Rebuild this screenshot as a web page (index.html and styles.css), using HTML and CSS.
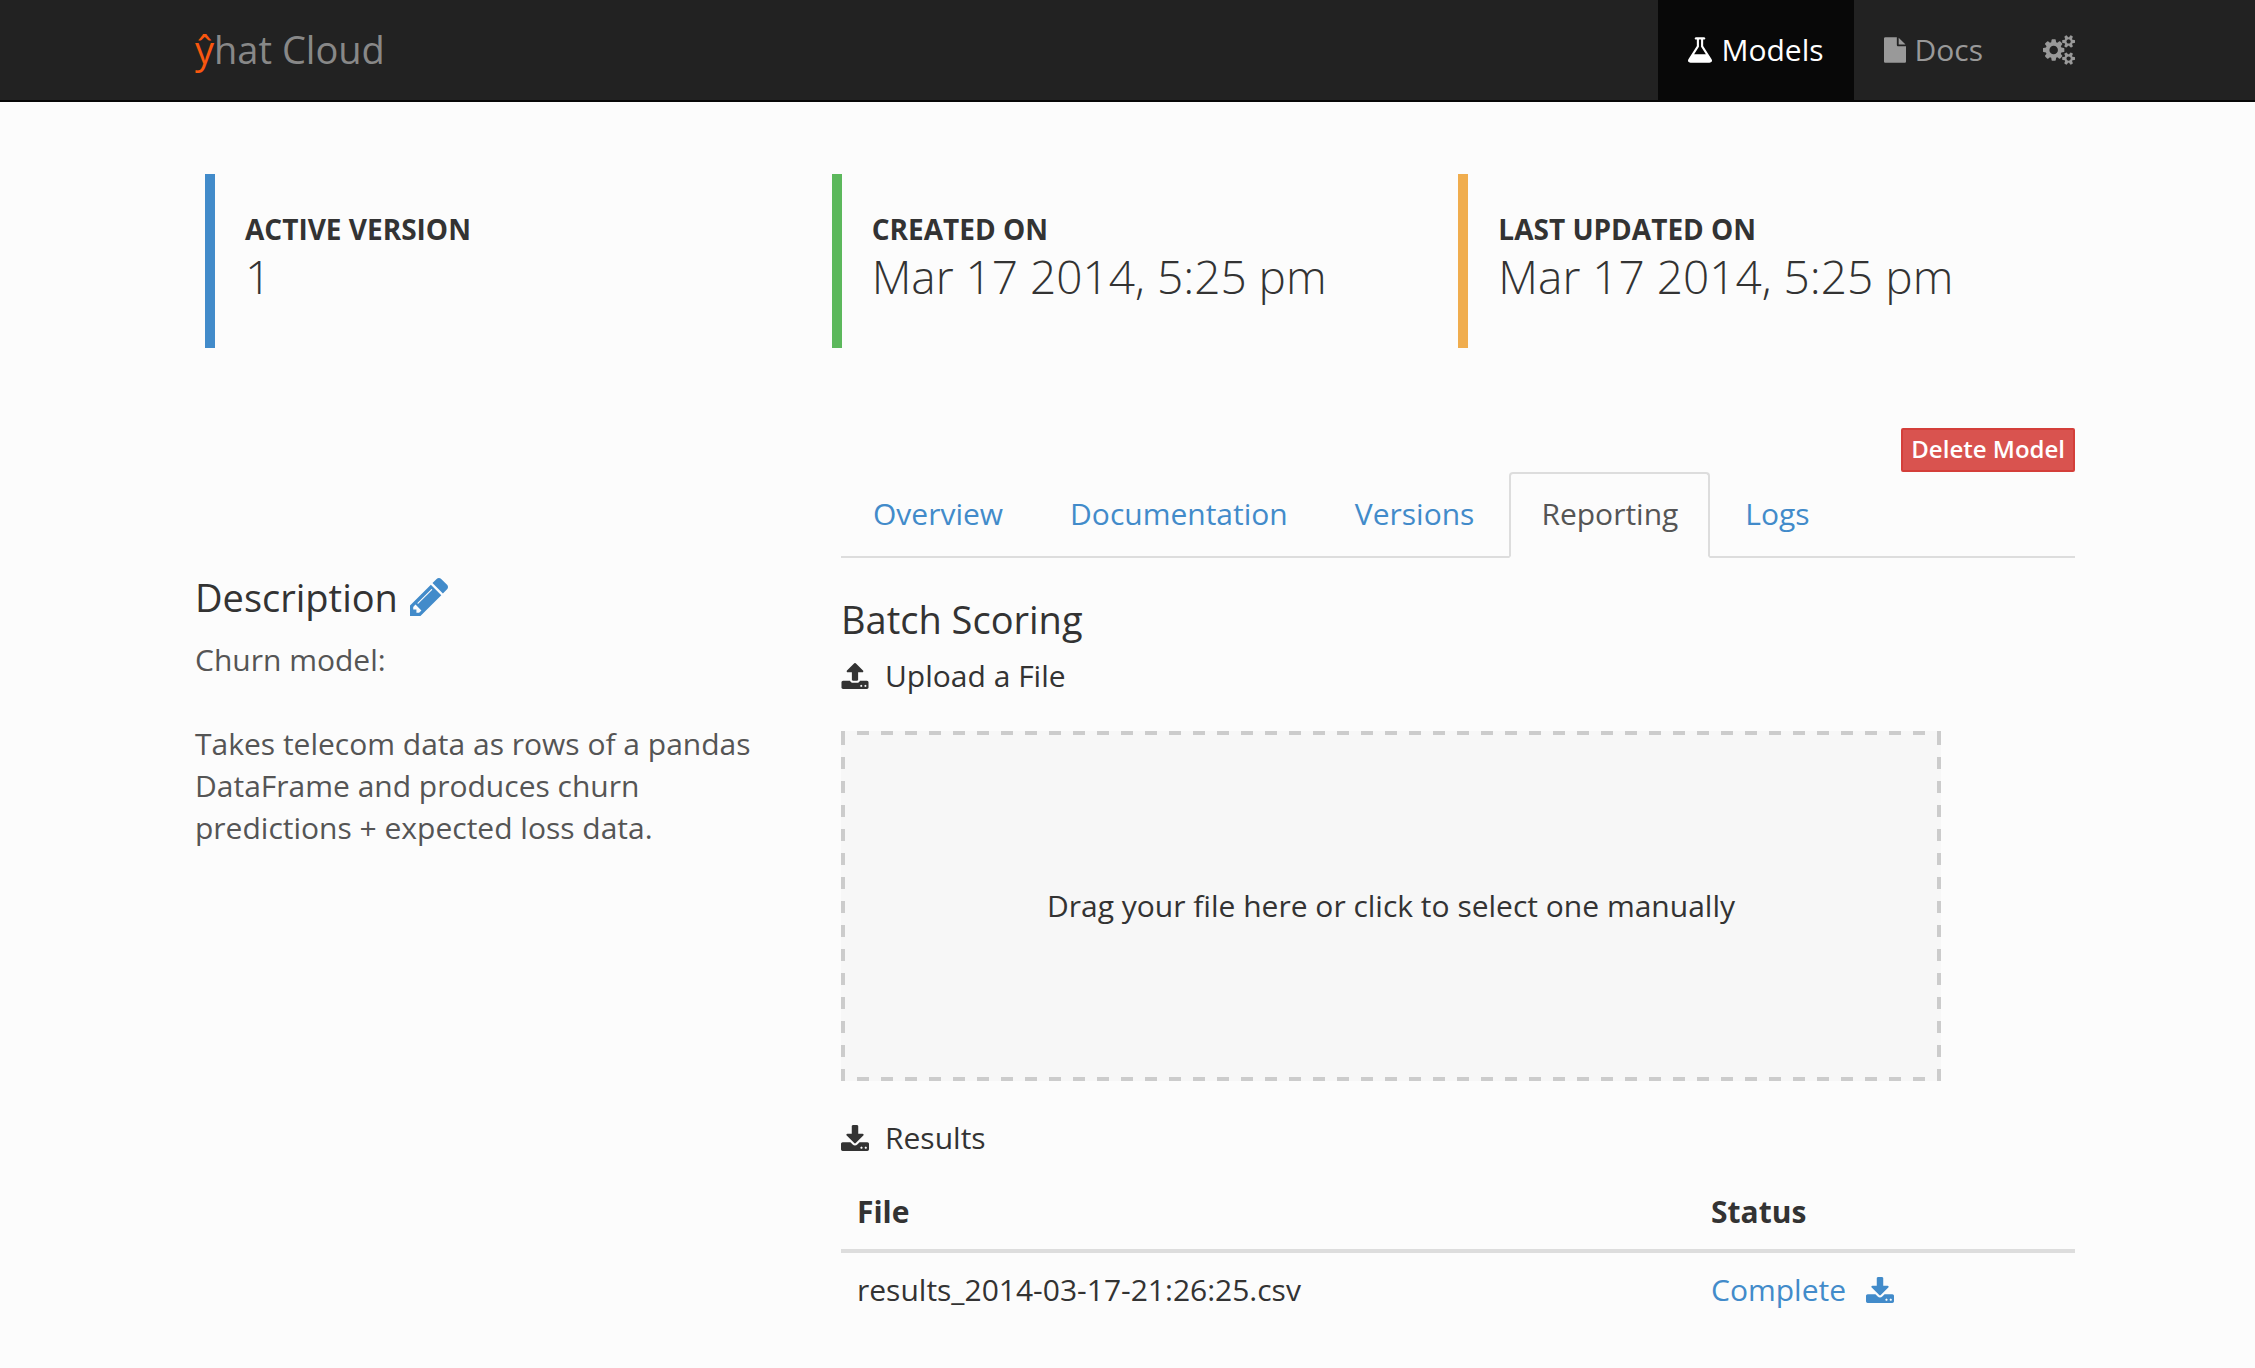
FILE: index.html
```html
<!DOCTYPE html>
<html lang="en">
<head>
<meta charset="utf-8">
<title>ŷhat Cloud</title>
<link rel="stylesheet" href="styles.css">
</head>
<body>
<svg class="sprite" aria-hidden="true">
  <symbol id="upload" viewBox="64 64 1664 1600"><path d="M1344 1472q0-26-19-45t-45-19-45 19-19 45 19 45 45 19 45-19 19-45zm256 0q0-26-19-45t-45-19-45 19-19 45 19 45 45 19 45-19 19-45zm128-224v320q0 40-28 68t-68 28h-1472q-40 0-68-28t-28-68v-320q0-40 28-68t68-28h427q21 56 70.500 92t110.500 36h256q61 0 110.500-36t70.500-92h427q40 0 68 28t28 68zm-325-648q-17 40-59 40h-256v448q0 26-19 45t-45 19h-256q-26 0-45-19t-19-45v-448h-256q-42 0-59-40-17-39 14-69l448-448q18-19 45-19t45 19l448 448q31 30 14 69z"/></symbol>
  <symbol id="download" viewBox="64 0 1664 1536"><path d="M1344 1344q0-26-19-45t-45-19-45 19-19 45 19 45 45 19 45-19 19-45zm256 0q0-26-19-45t-45-19-45 19-19 45 19 45 45 19 45-19 19-45zm128-224v320q0 40-28 68t-68 28h-1472q-40 0-68-28t-28-68v-320q0-40 28-68t68-28h465l135 136q58 56 136 56t136-56l136-136h464q40 0 68 28t28 68zm-325-569q17 41-14 70l-448 448q-18 19-45 19t-45-19l-448-448q-31-29-14-70 17-39 59-39h256v-448q0-26 19-45t45-19h256q26 0 45 19t19 45v448h256q42 0 59 39z"/></symbol>
</svg>

<header class="navbar">
  <div class="container navbar-row">
    <a class="brand" href="#"><span class="brand-mark">ŷ</span>hat Cloud</a>
    <nav class="nav">
      <a class="nav-link active" href="#">
        <svg class="icon-flask" viewBox="168 128 1456 1536" aria-hidden="true"><path d="M1591 1448q56 89 21.500 152.500t-140.500 63.500h-1152q-106 0-140.500-63.500t21.500-152.500l503-793v-399h-64q-26 0-45-19t-19-45 19-45 45-19h512q26 0 45 19t19 45-19 45-45 19h-64v399zm-779-725l-272 429h712l-272-429-20-31v-436h-128v436z"/></svg>
        Models</a>
      <a class="nav-link" href="#">
        <svg class="icon-file" viewBox="128 0 1536 1792" aria-hidden="true"><path d="M1152 512v-472q22 14 36 28l408 408q14 14 28 36h-472zm-128 32q0 40 28 68t68 28h544v1056q0 40-28 68t-68 28h-1344q-40 0-68-28t-28-68v-1600q0-40 28-68t68-28h800v544z"/></svg>
        Docs</a>
      <a class="nav-link" href="#" aria-label="Settings">
        <svg class="icon-cogs" viewBox="-64 0 1920 1792" aria-hidden="true"><path d="M832 896q0-106-75-181t-181-75-181 75-75 181 75 181 181 75 181-75 75-181zm768 512q0-52-38-90t-90-38-90 38-38 90q0 53 37.500 90.500t90.500 37.500 90.500-37.500 37.500-90.500zm0-1024q0-52-38-90t-90-38-90 38-38 90q0 53 37.500 90.500t90.500 37.500 90.500-37.500 37.500-90.500zm-384 421v185q0 10-7 19.500t-16 10.500l-155 24q-11 35-32 76 34 48 90 115 7 11 7 20 0 12-7 19-23 30-82.500 89.500t-78.500 59.500q-11 0-21-7l-115-90q-37 19-77 31-11 108-23 155-7 24-30 24h-186q-11 0-20-7.500t-10-17.500l-23-153q-34-10-75-31l-118 89q-7 7-20 7-11 0-21-8-144-133-144-160 0-9 7-19 10-14 41-53t47-61q-23-44-35-82l-152-24q-10-1-17-9.500t-7-19.500v-185q0-10 7-19.500t16-10.500l155-24q11-35 32-76-34-48-90-115-7-11-7-20 0-12 7-20 22-30 82-89t79-59q11 0 21 7l115 90q34-18 77-32 11-108 23-154 7-24 30-24h186q11 0 20 7.500t10 17.500l23 153q34 10 75 31l118-89q8-7 20-7 11 0 21 8 144 133 144 160 0 8-7 19-12 16-42 54t-45 60q23 48 34 82l152 23q10 2 17 10.500t7 19.500zm640 533v140q0 16-149 31-12 27-30 52 51 113 51 138 0 4-4 7-122 71-124 71-8 0-46-47t-52-68q-20 2-30 2t-30-2q-14 21-52 68t-46 47q-2 0-124-71-4-3-4-7 0-25 51-138-18-25-30-52-149-15-149-31v-140q0-16 149-31 13-29 30-52-51-113-51-138 0-4 4-7 4-2 35-20t59-34 30-16q8 0 46 46.500t52 67.500q20-2 30-2t30 2q51-71 92-112l6-2q4 0 124 70 4 3 4 7 0 25-51 138 17 23 30 52 149 15 149 31zm0-1024v140q0 16-149 31-12 27-30 52 51 113 51 138 0 4-4 7-122 71-124 71-8 0-46-47t-52-68q-20 2-30 2t-30-2q-14 21-52 68t-46 47q-2 0-124-71-4-3-4-7 0-25 51-138-18-25-30-52-149-15-149-31v-140q0-16 149-31 13-29 30-52-51-113-51-138 0-4 4-7 4-2 35-20t59-34 30-16q8 0 46 46.500t52 67.500q20-2 30-2t30 2q51-71 92-112l6-2q4 0 124 70 4 3 4 7 0 25-51 138 17 23 30 52 149 15 149 31z"/></svg>
      </a>
    </nav>
  </div>
</header>

<main class="container">
  <section class="stats">
    <div class="stat stat-blue">
      <h5 class="stat-label">ACTIVE VERSION</h5>
      <p class="stat-value">1</p>
    </div>
    <div class="stat stat-green">
      <h5 class="stat-label">CREATED ON</h5>
      <p class="stat-value">Mar 17 2014, 5:25 pm</p>
    </div>
    <div class="stat stat-orange">
      <h5 class="stat-label">LAST UPDATED ON</h5>
      <p class="stat-value">Mar 17 2014, 5:25 pm</p>
    </div>
  </section>

  <div class="columns">
    <aside class="description">
      <h4 class="heading">Description
        <a class="edit" href="#" aria-label="Edit description"><svg class="icon-pencil" viewBox="128 149 1515 1515" aria-hidden="true"><path d="M491 1536l91-91-235-235-91 91v107h128v128h107zm523-928q0-22-22-22-10 0-17 7l-542 542q-7 7-7 17 0 22 22 22 10 0 17-7l542-542q7-7 7-17zm-54-192l416 416-832 832h-416v-416zm683 96q0 53-37 90l-166 166-416-416 166-165q36-38 90-38 53 0 91 38l235 234q37 39 37 91z"/></svg></a>
      </h4>
      <p class="description-text">Churn model:<br><br>Takes telecom data as rows of a pandas DataFrame and produces churn predictions + expected loss data.</p>
    </aside>

    <div class="model">
      <div class="actions"><button class="delete" type="button">Delete Model</button></div>
      <nav class="tabs">
        <a class="tab" href="#">Overview</a>
        <a class="tab" href="#">Documentation</a>
        <a class="tab" href="#">Versions</a>
        <a class="tab current" href="#">Reporting</a>
        <a class="tab" href="#">Logs</a>
      </nav>

      <h4 class="heading">Batch Scoring</h4>
      <h5 class="subheading"><svg class="icon-tray" aria-hidden="true"><use href="#upload"/></svg>Upload a File</h5>
      <button class="dropzone" type="button">Drag your file here or click to select one manually</button>

      <h5 class="subheading"><svg class="icon-tray" aria-hidden="true"><use href="#download"/></svg>Results</h5>
      <table class="results">
        <thead><tr><th class="file-col">File</th><th>Status</th></tr></thead>
        <tbody><tr><td>results_2014-03-17-21:26:25.csv</td><td><a class="complete" href="#">Complete<svg class="icon-tray" aria-hidden="true"><use href="#download"/></svg></a></td></tr></tbody>
      </table>
    </div>
  </div>
</main>
</body>
</html>
```
FILE: styles.css
```css
* { box-sizing: border-box; }

body {
  margin: 0;
  background: #fcfcfc;
  color: #333;
  font: 400 30px/42px "Open Sans", "Noto Sans", sans-serif;
}

a { color: #428bca; text-decoration: none; }
h4, h5, p { margin: 0; }
svg { fill: currentColor; flex: none; }
.sprite { display: none; }

.container { padding: 0 180px 0 195px; }

/* Top bar */
.navbar {
  background: #222;
  border-bottom: 2px solid #080808;
}
.navbar-row { display: flex; justify-content: space-between; height: 100px; }
.brand { color: #888; font-size: 38px; line-height: 98px; }
.brand-mark { color: #f9570f; }
.nav { display: flex; margin-right: -30px; }
.nav-link {
  display: flex;
  align-items: center;
  gap: 9px;
  height: 100px;
  padding: 0 30px;
  color: #999;
}
.nav-link.active { background: #080808; color: #fff; }
.icon-flask { width: 24px; height: 26px; }
.icon-file { width: 22px; height: 26px; }
.icon-cogs { width: 32px; height: 30px; }

/* Model facts */
.stats {
  display: grid;
  grid-template-columns: repeat(3, 1fr);
  margin: 72px -10px 0 10px;
}
.stat {
  height: 174px;
  padding: 36px 0 0 30px;
  border-left: 10px solid;
}
.stat-blue { border-color: #428bca; }
.stat-green { border-color: #5cb85c; }
.stat-orange { border-color: #f0ad4e; }
.stat-label { color: #333; font-size: 28px; line-height: 38px; font-weight: 700; }
.stat-value { font-size: 46px; line-height: 56px; font-weight: 300; }

/* Description and model details */
.columns {
  display: grid;
  grid-template-columns: 586px 1fr;
  column-gap: 60px;
  margin-top: 80px;
}
.heading {
  display: flex;
  align-items: center;
  gap: 12px;
  font-size: 38px;
  line-height: 42px;
  font-weight: 400;
}
.description { padding-top: 148px; }
.edit { display: flex; }
.icon-pencil { width: 38px; height: 38px; }
.description-text { margin-top: 21px; color: #555; }

.actions { display: flex; justify-content: flex-end; }
.delete {
  height: 44px;
  padding: 0 8px 2px;
  border: 2px solid #d43f3a;
  border-radius: 2px;
  background: #d9534f;
  color: #fff;
  font: 600 24px/36px "Open Sans", "Noto Sans", sans-serif;
}
.tabs {
  display: flex;
  gap: 3px;
  margin-bottom: 40px;
  border-bottom: 2px solid #ddd;
}
.tab {
  margin-bottom: -2px;
  padding: 19px 30px 21px;
  border: 2px solid transparent;
  border-radius: 4px 4px 0 0;
}
.tab.current {
  border-color: #ddd;
  border-bottom-color: #fcfcfc;
  background: #fcfcfc;
  color: #555;
}

.subheading {
  display: flex;
  align-items: center;
  gap: 16px;
  margin-top: 15px;
  font-size: 30px;
  line-height: 42px;
  font-weight: 400;
}
.icon-tray { width: 28px; height: 26px; }

.dropzone {
  display: block;
  width: 100%;
  max-width: 1100px;
  height: 350px;
  margin: 34px 0 36px;
  border: 0;
  background:
    repeating-linear-gradient(90deg, #ccc 0 4px, transparent 4px 16px, #ccc 16px 24px) top / 100% 4px no-repeat,
    repeating-linear-gradient(90deg, #ccc 0 4px, transparent 4px 16px, #ccc 16px 24px) bottom / 100% 4px no-repeat,
    repeating-linear-gradient(0deg, #ccc 0 12px, transparent 12px 24px) left / 4px 100% no-repeat,
    repeating-linear-gradient(0deg, #ccc 0 12px, transparent 12px 24px) right / 4px 100% no-repeat,
    #f7f7f7;
  color: #333;
  font: inherit;
}

.results { width: 100%; margin-top: 16px; border-collapse: collapse; }
.results th, .results td { padding: 16px; text-align: left; }
.results th { border-bottom: 4px solid #ddd; font-weight: 700; }
.file-col { width: 854px; }
.complete { display: flex; align-items: center; gap: 20px; }
```
